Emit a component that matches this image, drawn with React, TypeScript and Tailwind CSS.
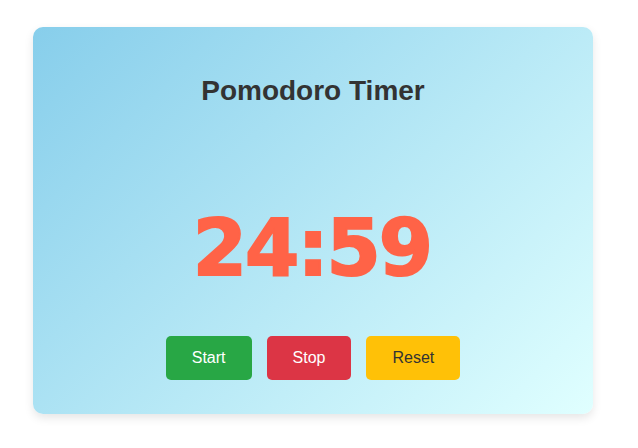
import React from "react";

export default function App() {
  return (
    <div className="w-[638px] h-[448px] bg-white" style={{ fontFamily: '"Liberation Sans", Arial, sans-serif' }}>
      <div className="ml-[33px] pt-[27px]">
        <div className="w-[560px] h-[387px] rounded-[10px] bg-[linear-gradient(135deg,#87ceeb,#e0ffff)] shadow-[0_4px_10px_rgba(0,0,0,0.1)] flex flex-col items-center pt-[48px]">
          <h1 className="text-[28px] leading-[32px] h-[32px] font-bold text-[#333333]">Pomodoro Timer</h1>
          <div className="mt-[101px] text-[78px] leading-[80px] h-[80px] font-bold text-[#ff6347] tracking-[-2px] [-webkit-text-stroke:2px_#ff6347] font-['DejaVu_Sans',sans-serif] pr-[2px]">
            24:59
          </div>
          <div className="mt-[48px] flex gap-[15px]">
            <button className="h-[44px] px-[26px] rounded-[5px] bg-[#28a745] text-white text-[16px] flex items-center justify-center">Start</button>
            <button className="h-[44px] px-[26px] rounded-[5px] bg-[#dc3545] text-white text-[16px] flex items-center justify-center">Stop</button>
            <button className="h-[44px] px-[26px] rounded-[5px] bg-[#ffc107] text-[#333333] text-[16px] flex items-center justify-center">Reset</button>
          </div>
        </div>
      </div>
    </div>
  );
}
